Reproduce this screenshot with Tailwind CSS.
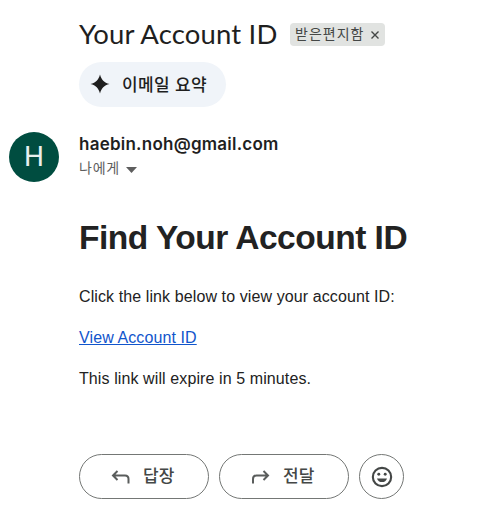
<!DOCTYPE html>
<html lang="ko">
<head>
<meta charset="utf-8">
<title>Your Account ID</title>
<script src="https://cdn.jsdelivr.net/npm/@tailwindcss/browser@4"></script>
</head>
<body class="h-[532px] w-[477px] overflow-hidden bg-white pl-[79px] font-['Inter','Noto_Sans_CJK_KR',sans-serif] text-[#1f1f1f]">
<header class="flex h-[62px] items-center pt-[7px]">
<h1 class="w-[211px] -mt-[2px] whitespace-nowrap font-['Lato',sans-serif] text-[27.500px] leading-9 tracking-[0.150px]">Your Account ID</h1>
<span class="flex h-[23px] w-[95px] items-center justify-between rounded-[4px] bg-[#e1e3e1] pl-[5px] pr-[6px] text-[14px] text-[#444746]"><span class="relative -top-px whitespace-nowrap tracking-[1px]">받은편지함</span>
<svg class="mt-px size-[8px] shrink-0" viewBox="0 0 8 8" stroke="#444746" stroke-width="1.4"><path d="M.5.5l7 7M7.500.500l-7 7"/></svg></span>
</header>
<button class="flex h-[45px] w-[147px] items-center rounded-full bg-[#f0f4f9] pl-[11px] text-[17px] font-medium"><svg class="mr-[12px] size-5 -translate-y-px" viewBox="0 0 20 20" fill="#1f1f1f"><path d="M10 .5C11.500 6 14 8.500 19.500 10C14 11.500 11.500 14 10 19.500C8.500 14 6 11.500 .5 10C6 8.500 8.500 6 10 .5Z"/></svg><span class="whitespace-nowrap leading-[24px] tracking-[0.4px]">이메일 요약</span></button>
<section class="-ml-[70px] mt-[25px] flex h-[50px]">
<div class="mr-5 flex size-[50px] items-center justify-center rounded-full bg-[#004d40] font-['Roboto',sans-serif] text-[28px] text-[#e8f0ee]">H</div>
<div><div class="text-[17px] font-semibold leading-6 tracking-[0.240px]">haebin.noh@gmail.com</div><div class="flex items-center text-[14px] leading-6 text-[#5e5e5e]"><span class="tracking-[0.8px]">나에게</span><svg class="ml-[6px] mt-[3px] h-[6px] w-[11px]" viewBox="0 0 11 6"><path d="M0 0h11L5.500 6z" fill="#5e5e5e"/></svg></div></div>
</section>
<main class="pt-[34px] font-['Liberation_Sans',sans-serif] text-[16px] leading-[19px] tracking-[0.100px] text-[#222]">
<h2 class="relative top-px whitespace-nowrap text-[33.500px] font-bold leading-[42px] tracking-[-0.500px]">Find Your Account ID</h2>
<p class="mt-[29px]">Click the link below to view your account ID:</p>
<p class="mt-[22px]"><a class="text-[#15c] underline" href="#">View Account ID</a></p>
<p class="mt-[22px]">This link will expire in 5 minutes.</p>
</main>
<footer class="mt-[66px] flex gap-[10px] text-[17px] font-medium text-[#444746]">
<button class="flex h-[45px] w-[130px] items-center rounded-full border border-[#747775] pl-[31px]"><svg class="mr-[13px] h-[16px] w-[19px]" viewBox="0 0 19 16" fill="none" stroke="#5a5d5c" stroke-width="2"><path d="M6.500 2L2 6.500L6.500 11M2.500 6.500H14q3.500 0 3.500 3.500v4.500"/></svg><span>답장</span></button>
<button class="flex h-[45px] w-[130px] items-center rounded-full border border-[#747775] pl-[31px]"><svg class="mr-[13px] h-[16px] w-[19px]" viewBox="0 0 19 16" fill="none" stroke="#5a5d5c" stroke-width="2"><path d="M12.500 2L17 6.500L12.500 11M16.500 6.500H5.500q-3.500 0-3.500 3.500v4.500"/></svg><span>전달</span></button>
<button class="flex size-[45px] items-center justify-center rounded-full border border-[#747775]"><svg class="size-[22px]" viewBox="0 0 24 24" fill="#444746"><circle cx="12" cy="12" r="10" fill="none" stroke="#444746" stroke-width="2.300"/><circle cx="8.500" cy="9" r="1.600"/><circle cx="15.500" cy="9" r="1.600"/><path d="M6.500 13.500h11a5.800 5.800 0 0 1-11 0z"/></svg></button>
</footer>
</body>
</html>
